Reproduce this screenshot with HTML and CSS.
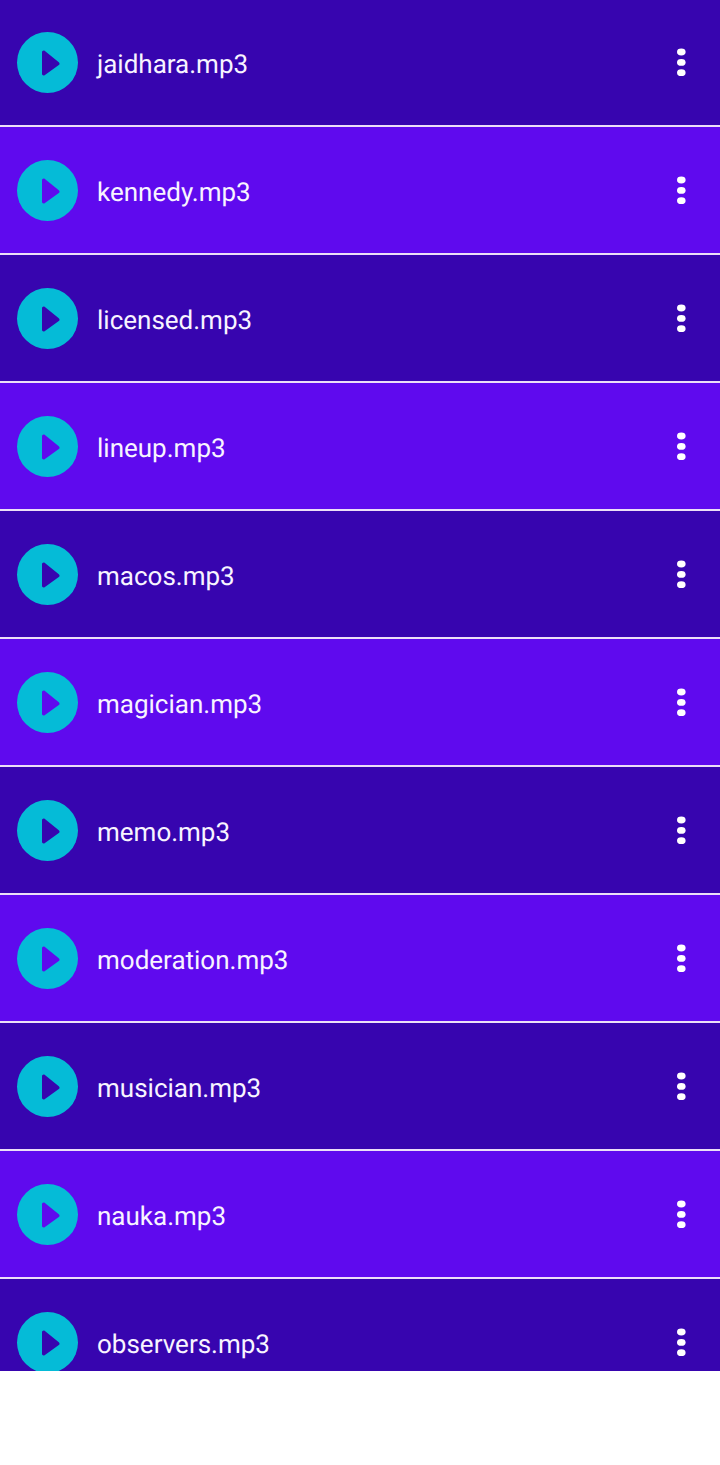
FILE: index.html
```html
<!DOCTYPE html>
<html lang="en">
<head>
    <meta charset="UTF-8">
    <meta name="viewport" content="width=device-width, initial-scale=1.0">
    <title>Songs</title>
    <link rel="stylesheet" href="styles.css">
</head>
<body>
    <svg class="icon-defs" width="0" height="0">
        <symbol id="play" viewBox="0 0 40 40"><path d="M14 9.2v21.6c0 1.4 1.5 2.2 2.6 1.4l14.2-10.1c1-.7 1-2.1 0-2.8L16.6 7.8c-1.1-.8-2.6 0-2.6 1.4z"/></symbol>
        <symbol id="more" viewBox="0 0 36 36"><ellipse cx="18.3" cy="8" rx="4.3" ry="3.4"/><ellipse cx="18.3" cy="18.4" rx="4.3" ry="3.4"/><ellipse cx="18.3" cy="28.7" rx="4.3" ry="3.4"/></symbol>
    </svg>
    <div class="song-list">
        <div class="song-row"><div class="play-button"><svg class="play-icon"><use href="#play"/></svg></div><span class="song-name">jaidhara.mp3</span><svg class="more-icon"><use href="#more"/></svg></div>
        <div class="song-row"><div class="play-button"><svg class="play-icon"><use href="#play"/></svg></div><span class="song-name">kennedy.mp3</span><svg class="more-icon"><use href="#more"/></svg></div>
        <div class="song-row"><div class="play-button"><svg class="play-icon"><use href="#play"/></svg></div><span class="song-name">licensed.mp3</span><svg class="more-icon"><use href="#more"/></svg></div>
        <div class="song-row"><div class="play-button"><svg class="play-icon"><use href="#play"/></svg></div><span class="song-name">lineup.mp3</span><svg class="more-icon"><use href="#more"/></svg></div>
        <div class="song-row"><div class="play-button"><svg class="play-icon"><use href="#play"/></svg></div><span class="song-name">macos.mp3</span><svg class="more-icon"><use href="#more"/></svg></div>
        <div class="song-row"><div class="play-button"><svg class="play-icon"><use href="#play"/></svg></div><span class="song-name">magician.mp3</span><svg class="more-icon"><use href="#more"/></svg></div>
        <div class="song-row"><div class="play-button"><svg class="play-icon"><use href="#play"/></svg></div><span class="song-name">memo.mp3</span><svg class="more-icon"><use href="#more"/></svg></div>
        <div class="song-row"><div class="play-button"><svg class="play-icon"><use href="#play"/></svg></div><span class="song-name">moderation.mp3</span><svg class="more-icon"><use href="#more"/></svg></div>
        <div class="song-row"><div class="play-button"><svg class="play-icon"><use href="#play"/></svg></div><span class="song-name">musician.mp3</span><svg class="more-icon"><use href="#more"/></svg></div>
        <div class="song-row"><div class="play-button"><svg class="play-icon"><use href="#play"/></svg></div><span class="song-name">nauka.mp3</span><svg class="more-icon"><use href="#more"/></svg></div>
        <div class="song-row"><div class="play-button"><svg class="play-icon"><use href="#play"/></svg></div><span class="song-name">observers.mp3</span><svg class="more-icon"><use href="#more"/></svg></div>
    </div>
</body>
</html>
```

FILE: styles.css
```css
* {
    margin: 0;
    padding: 0;
    box-sizing: border-box;
}

body {
    font-family: 'Roboto', sans-serif;
    background: #ffffff;
}

.icon-defs {
    display: block;
    height: 0;
}

.song-list {
    height: 1372px;
    margin-top: -1px;
    overflow: hidden;
}

.song-row {
    height: 128px;
    display: flex;
    align-items: flex-start;
    padding: 33px 21px 0 17px;
    background: #3705af;
    border-bottom: 2px solid #ecdff8;
}

.song-row:nth-child(even) {
    background: #5f0aee;
}

.play-button {
    width: 61px;
    height: 61px;
    border-radius: 50%;
    background: #05bbd7;
    display: flex;
    align-items: center;
    justify-content: center;
    flex-shrink: 0;
}

.play-icon {
    width: 40px;
    height: 40px;
    fill: #3705af;
}

.song-row:nth-child(even) .play-icon {
    fill: #5f0aee;
}

.song-name {
    flex: 1;
    margin-left: 19px;
    font-size: 26px;
    line-height: 66px;
    color: #f8f4ff;
    text-rendering: geometricPrecision;
}

.more-icon {
    width: 36px;
    height: 36px;
    margin-top: 12px;
    fill: #ffffff;
}
```
